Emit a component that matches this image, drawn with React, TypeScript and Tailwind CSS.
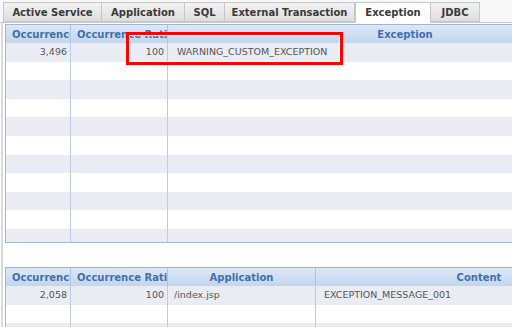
const tabs = [
  { label: "Active Service", w: "w-[99px]" },
  { label: "Application", w: "w-[84px]" },
  { label: "SQL", w: "w-[41px]" },
  { label: "External Transaction", w: "w-[131px]" },
  { label: "Exception", w: "w-[76px]", active: true },
  { label: "JDBC", w: "w-[50px]" },
];

type Col = { w: string; head: string; align: string; headAlign: string };

const topCols: Col[] = [
  { w: "w-[65px]", head: "Occurrence", align: "justify-end pr-[3px]", headAlign: "justify-start pl-[6px]" },
  { w: "w-[97px]", head: "Occurrence Ratio", align: "justify-end pr-[3px]", headAlign: "justify-start pl-[6px]" },
  { w: "w-[475px]", head: "Exception", align: "justify-start pl-[9px]", headAlign: "justify-center" },
];

const bottomCols: Col[] = [
  { w: "w-[65px]", head: "Occurrence", align: "justify-end pr-[3px]", headAlign: "justify-start pl-[6px]" },
  { w: "w-[97px]", head: "Occurrence Ratio", align: "justify-end pr-[3px]", headAlign: "justify-start pl-[6px]" },
  { w: "w-[148px]", head: "Application", align: "justify-start pl-[6px]", headAlign: "justify-center" },
  { w: "w-[327px]", head: "Content", align: "justify-start pl-[8px]", headAlign: "justify-center" },
];

function Grid({
  cols,
  rows,
  bodyH,
}: {
  cols: Col[];
  rows: string[][];
  bodyH: string;
}) {
  const total = 12;
  return (
    <div className="w-[637px] shrink-0 border-b border-l border-t border-[#9fb6d6]">
      <div className="flex h-[18px] bg-gradient-to-b from-[#dde8f6] to-[#c3d6ee]">
        {cols.map((c, i) => (
          <div
            key={i}
            className={`${c.w} flex shrink-0 items-center overflow-hidden whitespace-nowrap border-r border-[#adc3df] text-[10px] font-bold text-[#3f70ad] ${c.headAlign}`}
          >
            {c.head}
          </div>
        ))}
      </div>
      <div className={`${bodyH} overflow-hidden`}>
        {Array.from({ length: total }).map((_, r) => (
          <div
            key={r}
            className={`flex h-[18.6px] ${r % 2 === 0 ? "bg-[#e9ecf3]" : "bg-white"}`}
          >
            {cols.map((c, i) => (
              <div
                key={i}
                className={`${c.w} flex shrink-0 items-center overflow-hidden whitespace-nowrap border-r-[1.5px] border-[#bccbdf] text-[9.5px] text-[#555555] ${c.align}`}
              >
                {rows[r]?.[i] ?? ""}
              </div>
            ))}
          </div>
        ))}
      </div>
    </div>
  );
}

export default function App() {
  return (
    <div className="relative h-[327px] w-[512px] overflow-hidden bg-white font-['DejaVu_Sans',sans-serif]">
      <div className="flex h-[23px] items-end border-b border-[#c8c8c8] bg-[#f7f7f7] pl-[3px]">
        {tabs.map((t) => (
          <div
            key={t.label}
            className={`${t.w} flex shrink-0 items-center justify-center whitespace-nowrap border border-[#c6c6c6] text-[10px] font-bold text-[#3a3a3a] ${
              t.active
                ? "-mb-px h-[21px] border-b-white bg-white"
                : "-ml-px h-[20px] bg-gradient-to-b from-[#f3f3f3] to-[#dddddd] first:ml-0"
            }`}
          >
            {t.label}
          </div>
        ))}
      </div>

      <div className="flex h-[304px]">
        <div className="ml-px w-[2px] shrink-0 bg-[#d9d9d9]" />
        <div className="ml-[2px] flex flex-col pt-[1px]">
          <Grid
            cols={topCols}
            rows={[["3,496", "100", "WARNING_CUSTOM_EXCEPTION"]]}
            bodyH="h-[199px]"
          />
          <div className="h-[24px] shrink-0" />
          <Grid
            cols={bottomCols}
            rows={[["2,058", "100", "/index.jsp", "EXCEPTION_MESSAGE_001"]]}
            bodyH="h-[60px]"
          />
        </div>
      </div>

      <div className="absolute left-[126px] top-[32px] h-[33px] w-[217px] border-[3px] border-[#ff0000] shadow-[inset_0_0_0_1px_#ffffff]" />
    </div>
  );
}
